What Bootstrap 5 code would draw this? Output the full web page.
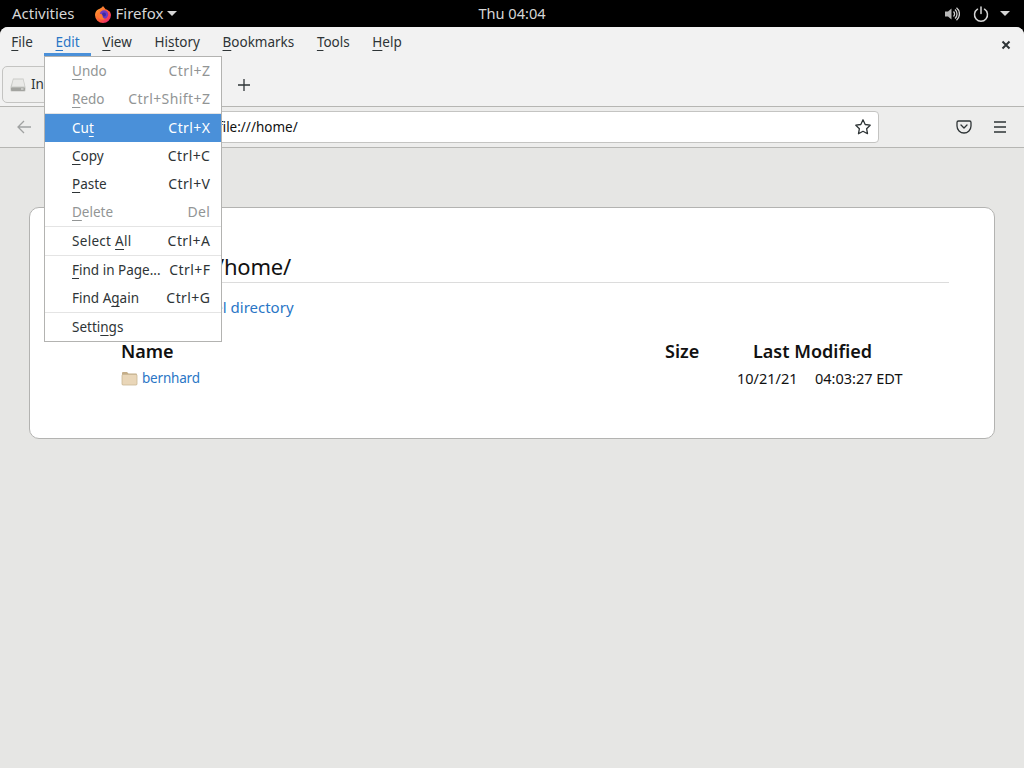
<!DOCTYPE html>
<html lang="en">
<head>
<meta charset="UTF-8">
<meta name="viewport" content="width=device-width, initial-scale=1.0">
<title>Index of file:///home/</title>
<link href="https://cdn.jsdelivr.net/npm/bootstrap@5.3.0/dist/css/bootstrap.min.css" rel="stylesheet">
<style>
html, body { height: 100%; }
body { background: #000; font-family: "Noto Sans", "Open Sans", sans-serif; font-size: 13.5px; overflow: hidden; }
u { text-underline-offset: 3px; text-decoration-thickness: 1px; }

/* gnome top bar */
.top-bar { height: 27px; background: #000; color: #d6d6d6; position: relative; font-size: 15px; }
.top-label { margin-left: 12px; }
.top-logo { margin-left: 19px; }
.top-clock { position: absolute; left: 0; right: 0; top: 0; line-height: 26px; text-align: center; font-size: 14.6px; }
.top-power { margin-left: 13px; }
.caret-down { width: 0; height: 0; border-left: 5px solid transparent; border-right: 5px solid transparent; border-top: 5px solid #d6d6d6; }
.caret-last { margin: 0 14px 0 11px; }

/* firefox window */
.ff-window { height: 741px; background: #e6e6e4; border-radius: 8px 8px 0 0; position: relative; overflow: hidden; }
.menu-bar { height: 29px; background: #f2f2f2; color: #2e3436; }
.menu-entry { padding: 0 11.3px; height: 29px; line-height: 30px; }
.menu-entry.is-open { color: #2a76c6; box-shadow: inset 0 -3px 0 #4a90d9; }
.win-close { position: absolute; right: 12px; top: 12px; }
.tab-strip { height: 51px; background: #f2f2f2; border-bottom: 1px solid #b6b6b3; }
.tab-box { width: 220px; height: 37px; margin: 10px 0 0 2px; background: #f0f0ef; border: 1px solid #c4c4c2; border-radius: 5px; padding-left: 7px; color: #2e3436; }
.tab-icon { margin-right: 5px; }
.tab-add { margin: 10px 0 0 0; width: 44px; height: 37px; }
.nav-strip { height: 41px; background: #ededec; border-bottom: 1px solid #b6b6b3; position: relative; }
.url-box { position: absolute; left: 205px; width: 674px; top: 4px; height: 32px; background: #fff; border: 1px solid #c4c4c2; border-radius: 4px; padding-left: 12px; line-height: 30px; color: #111; }
.url-star { position: absolute; right: 6px; top: 6px; }
.nav-icon { position: absolute; top: 12px; }

/* directory listing */
.listing { margin: 59px 0 0 29px; width: 966px; height: 232px; background: #fff; border: 1px solid #b3b3b1; border-radius: 10px; padding: 43px 45px 0 45px; color: #111; }
.listing-title { font-size: 22px; letter-spacing: -.2px; font-weight: 400; line-height: 30px; margin: 0; border-bottom: 1px solid #dcdcdc; padding-bottom: 1px; }
.listing-up { font-size: 15px; color: #2a76c6; margin: 13px 0 0 0; padding-left: 27px; line-height: 22px; text-decoration: none; display: block; }
.listing-head { font-size: 18px; font-weight: 600; margin: 20px 0 0 46px; line-height: 26px; }
.listing-row { font-size: 14.5px; margin: 2px 0 0 46px; line-height: 24px; }
.col-name { width: 544px; }
.col-size { width: 88px; }
.col-gap { width: 72px; }
.col-date { width: 78px; }
.file-link { color: #2a76c6; text-decoration: none; font-size: 13.5px; letter-spacing: -.2px; }

/* edit dropdown */
.edit-menu { position: absolute; left: 44px; top: 29px; width: 178px; background: #fff; border: 1px solid #b3b3b1; color: #2e3436; }
.edit-item { height: 28px; line-height: 28px; padding: 0 11px 0 27px; }
.edit-key { font-size: 14px; letter-spacing: .42px; margin-right: -.4px; }
.edit-wide { letter-spacing: .3px; }
.edit-item.is-off { color: #929595; }
.edit-item.is-active { background: #4a90d9; color: #fff; }
.edit-sep { height: 1px; background: #e4e4e4; }
</style>
</head>
<body>

<div class="top-bar d-flex align-items-center">
    <span class="top-label">Activities</span>
    <svg class="top-logo" width="18" height="18" viewBox="0 0 18 18">
        <defs><linearGradient id="foxg" x1="0" y1="0" x2="1" y2="1"><stop offset="0" stop-color="#ffb02e"/><stop offset=".55" stop-color="#ff5a36"/><stop offset="1" stop-color="#e31587"/></linearGradient></defs>
        <path d="M9 1c1 1.500 2 2 2.500 3.200C14.500 5 17 7 17 10a8 8 0 0 1-16 0c0-3 1.800-5 3.500-5.800C6 3.600 8 3 9 1z" fill="url(#foxg)"/>
        <circle cx="10" cy="9.500" r="4.200" fill="#6a3bc4"/>
        <circle cx="10" cy="9.500" r="2" fill="#3f2aa0"/>
        <path d="M3 8c2 1 4 .500 5 1.500S8 13 11 14c-3 1.500-8 0-8-6z" fill="#ff7a2e"/>
    </svg>
    <span class="ms-1">Firefox</span>
    <span class="caret-down ms-1"></span>
    <div class="top-clock">Thu 04:04</div>
    <div class="ms-auto d-flex align-items-center">
        <svg width="16" height="16" viewBox="0 0 16 16" fill="none">
            <path d="M1 5.500h3L7.500 2.500v11L4 10.500H1z" fill="#b8b8b8"/>
            <path d="M9.500 5.500a3.500 3.500 0 0 1 0 5M11 3.500a6 6 0 0 1 0 9M12.500 1.800a8 8 0 0 1 0 12.400" stroke="#d0d0d0" stroke-width="1.300"/>
        </svg>
        <svg class="top-power" width="16" height="16" viewBox="0 0 16 16" fill="none" stroke="#d6d6d6" stroke-width="1.500" stroke-linecap="round">
            <path d="M4.500 3.200a6.500 6.500 0 1 0 7 0M8 1v6.500"/>
        </svg>
        <span class="caret-down caret-last"></span>
    </div>
</div>

<div class="ff-window">
    <div class="menu-bar d-flex">
        <span class="menu-entry"><u>F</u>ile</span>
        <span class="menu-entry is-open"><u>E</u>dit</span>
        <span class="menu-entry"><u>V</u>iew</span>
        <span class="menu-entry">Hi<u>s</u>tory</span>
        <span class="menu-entry"><u>B</u>ookmarks</span>
        <span class="menu-entry"><u>T</u>ools</span>
        <span class="menu-entry"><u>H</u>elp</span>
    </div>
    <svg class="win-close" width="12" height="12" viewBox="0 0 12 12"><path d="M2.500 2.500l7 7M9.500 2.500l-7 7" stroke="#2e3436" stroke-width="2"/></svg>

    <div class="tab-strip d-flex">
        <div class="tab-box d-flex align-items-center">
            <svg class="tab-icon" width="16" height="16" viewBox="0 0 16 16">
                <path d="M3 1.500h10.500L15.500 10v3.500a1 1 0 0 1-1 1h-13a1 1 0 0 1-1-1V10z" fill="#c9cac7"/>
                <path d="M3.500 2.500h9.500l1.500 7H1.800z" fill="#e9e9e7"/>
                <rect x="1" y="10.500" width="14" height="3.500" rx="1" fill="#a3a4a0"/>
                <rect x="11" y="11.500" width="2.500" height="1" fill="#e9e9e7"/>
            </svg>
            <span>Index of file:///home/</span>
        </div>
        <div class="tab-add d-flex align-items-center justify-content-center">
            <svg width="12" height="12" viewBox="0 0 12 12"><path d="M6 0v12M0 6h12" stroke="#2e3436" stroke-width="1.300"/></svg>
        </div>
    </div>

    <div class="nav-strip">
        <svg class="nav-icon" style="left:16px" width="16" height="16" viewBox="0 0 16 16" fill="none" stroke="#a0a2a2" stroke-width="1.300"><path d="M15 8H2M8 2L2 8l6 6"/></svg>
        <div class="url-box">file:///home/
            <svg class="url-star" width="18" height="18" viewBox="0 0 18 18" fill="none" stroke="#2e3436" stroke-width="1.300" stroke-linejoin="round"><path d="M9 1.800l2.200 4.700 5 .700-3.600 3.500.900 5L9 13.300l-4.500 2.400.900-5L1.800 7.200l5-.700z"/></svg>
        </div>
        <svg class="nav-icon" style="left:956px" width="16" height="16" viewBox="0 0 16 16" fill="none" stroke="#2e3436" stroke-width="1.300" stroke-linecap="round" stroke-linejoin="round"><path d="M2.500 2h11A1.500 1.500 0 0 1 15 3.500V7a7 7 0 0 1-14 0V3.500A1.500 1.500 0 0 1 2.500 2z"/><path d="M5 6l3 3 3-3"/></svg>
        <svg class="nav-icon" style="left:992px" width="16" height="16" viewBox="0 0 16 16"><path d="M2 3h12M2 8h12M2 13h12" stroke="#2e3436" stroke-width="1.300"/></svg>
    </div>

    <div class="listing">
        <h1 class="listing-title">Index of file:///home/</h1>
        <a class="listing-up" href="#">Up to higher level directory</a>
        <div class="listing-head d-flex">
            <div class="col-name">Name</div>
            <div class="col-size">Size</div>
            <div>Last Modified</div>
        </div>
        <div class="listing-row d-flex">
            <div class="col-name d-flex align-items-center">
                <svg class="me-1" width="17" height="16" viewBox="0 0 17 16">
                    <path d="M1 3a1 1 0 0 1 1-1h4l1.500 1.500H15a1 1 0 0 1 1 1V14a1 1 0 0 1-1 1H2a1 1 0 0 1-1-1z" fill="#c4ad88"/>
                    <rect x="1" y="4.500" width="15" height="10.500" rx="1" fill="#e9d6b8" stroke="#c9b795" stroke-width=".8"/>
                </svg>
                <a class="file-link" href="#">bernhard</a>
            </div>
            <div class="col-gap"></div>
            <div class="col-date">10/21/21</div>
            <div>04:03:27 EDT</div>
        </div>
    </div>

    <div class="edit-menu">
        <div class="edit-item is-off d-flex justify-content-between"><span><u>U</u>ndo</span><span class="edit-key">Ctrl+Z</span></div>
        <div class="edit-item is-off d-flex justify-content-between"><span><u>R</u>edo</span><span class="edit-key">Ctrl+Shift+Z</span></div>
        <div class="edit-sep"></div>
        <div class="edit-item is-active d-flex justify-content-between"><span>Cu<u>t</u></span><span class="edit-key">Ctrl+X</span></div>
        <div class="edit-item d-flex justify-content-between"><span><u>C</u>opy</span><span class="edit-key">Ctrl+C</span></div>
        <div class="edit-item d-flex justify-content-between"><span><u>P</u>aste</span><span class="edit-key">Ctrl+V</span></div>
        <div class="edit-item is-off d-flex justify-content-between"><span><u>D</u>elete</span><span class="edit-key">Del</span></div>
        <div class="edit-sep"></div>
        <div class="edit-item d-flex justify-content-between"><span class="edit-wide">Select <u>A</u>ll</span><span class="edit-key">Ctrl+A</span></div>
        <div class="edit-sep"></div>
        <div class="edit-item d-flex justify-content-between"><span><u>F</u>ind in Page...</span><span class="edit-key">Ctrl+F</span></div>
        <div class="edit-item d-flex justify-content-between"><span>Find A<u>g</u>ain</span><span class="edit-key">Ctrl+G</span></div>
        <div class="edit-sep"></div>
        <div class="edit-item d-flex justify-content-between"><span>Setti<u>n</u>gs</span></div>
    </div>
</div>

<script src="https://cdn.jsdelivr.net/npm/bootstrap@5.3.0/dist/js/bootstrap.bundle.min.js"></script>
</body>
</html>
